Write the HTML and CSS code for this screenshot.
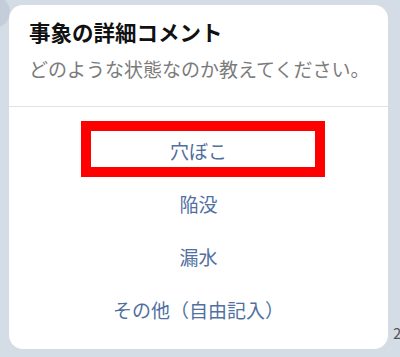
FILE: index.html
```html
<!DOCTYPE html>
<html lang="ja">
<head>
    <meta charset="UTF-8">
    <meta name="viewport" content="width=device-width, initial-scale=1.0">
    <title>事象の詳細コメント</title>
    <link rel="stylesheet" href="styles.css">
</head>
<body>
    <div class="avatar"></div>
    <span class="peek">2</span>
    <div class="sheet">
        <div class="head">
            <h1>事象の詳細コメント</h1>
            <p>どのような状態なのか教えてください。</p>
        </div>
        <ul class="options">
            <li class="picked">穴ぼこ<span class="mark"></span></li>
            <li>陥没</li>
            <li>漏水</li>
            <li>その他（自由記入）</li>
        </ul>
    </div>
</body>
</html>
```

FILE: styles.css
```css
* { margin: 0; padding: 0; }
body {
    position: relative;
    width: 400px; height: 357px;
    padding: 5px 12px 0 9px;
    box-sizing: border-box;
    overflow: hidden;
    background-color: #d4dce6;
    font-family: "Noto Sans CJK JP", "Noto Sans", sans-serif;
}

.avatar {
    position: absolute;
    top: -4px; left: -22px;
    width: 32px; height: 32px;
    border-radius: 50%;
    background-color: #c4cedb;
}
.peek {
    position: absolute;
    top: 322px; left: 393px;
    font-size: 15px;
    color: #555;
}

.sheet {
    position: relative;
    height: 344px;
    background-color: #fff;
    border-radius: 14px;
}
.head {
    padding: 13px 10px 23px 20px;
    border-bottom: 1px solid #e3e3e3;
    white-space: nowrap;
}
.head h1 {
    font-size: 21.5px;
    font-weight: bold;
    line-height: 28px;
    color: #111;
}
.head p {
    margin-top: 9px;
    font-size: 19px;
    line-height: 28px;
    color: #7b7b7b;
}

.options {
    list-style: none;
    padding: 17px 0 12px 0;
}
.options li {
    position: relative;
    height: 53px;
    line-height: 53px;
    text-align: center;
    font-size: 19px;
    color: #51709f;
}
.mark {
    position: absolute;
    top: -3px; left: 72px;
    width: 244px; height: 56px;
    box-sizing: border-box;
    border: 10px solid #ff0000;
}
```
